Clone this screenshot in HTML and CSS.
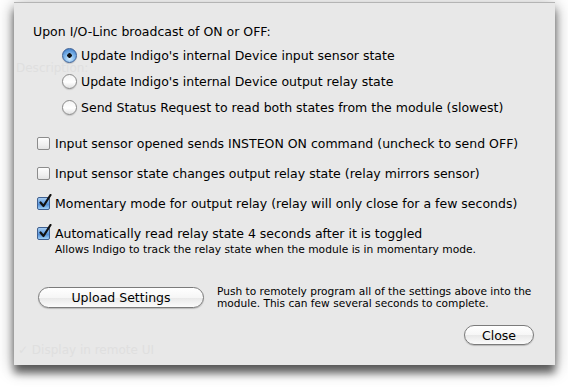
FILE: index.html
```html
<!DOCTYPE html>
<html lang="en">
<head>
    <meta charset="UTF-8">
    <title>I/O-Linc Settings</title>
    <link rel="stylesheet" href="styles.css">
</head>
<body>
    <div class="sheet">
        <div class="ghost">
            <div class="ghost-desc">Description:</div>
            <div class="ghost-remote">✓ Display in remote UI</div>
        </div>
        <div class="heading">Upon I/O-Linc broadcast of ON or OFF:</div>
        <div class="radio-group">
            <div class="row"><span class="radio selected"></span>Update Indigo's internal Device input sensor state</div>
            <div class="row"><span class="radio"></span>Update Indigo's internal Device output relay state</div>
            <div class="row"><span class="radio"></span>Send Status Request to read both states from the module (slowest)</div>
        </div>
        <div class="check-group">
            <div class="check-row"><span class="checkbox"></span>Input sensor opened sends INSTEON ON command (uncheck to send OFF)</div>
            <div class="check-row"><span class="checkbox"></span>Input sensor state changes output relay state (relay mirrors sensor)</div>
            <div class="check-row"><span class="checkbox checked"><svg viewBox="0 0 16 16" width="16" height="16"><path d="M3.5 8.5 L6.5 12 L13.5 1" fill="none" stroke="#111" stroke-width="2.2" stroke-linecap="round" stroke-linejoin="round"/></svg></span>Momentary mode for output relay (relay will only close for a few seconds)</div>
            <div class="check-row"><span class="checkbox checked"><svg viewBox="0 0 16 16" width="16" height="16"><path d="M3.5 8.5 L6.5 12 L13.5 1" fill="none" stroke="#111" stroke-width="2.2" stroke-linecap="round" stroke-linejoin="round"/></svg></span>Automatically read relay state 4 seconds after it is toggled</div>
            <div class="note">Allows Indigo to track the relay state when the module is in momentary mode.</div>
        </div>
        <div class="upload-row">
            <button class="pill upload">Upload Settings</button>
            <div class="upload-help">Push to remotely program all of the settings above into the<br>module. This can few several seconds to complete.</div>
        </div>
        <div class="footer">
            <button class="pill close">Close</button>
        </div>
    </div>
</body>
</html>
```

FILE: styles.css
```css
html, body {
    height: 388px;
}
body {
    margin: 0;
    background-color: #fff;
    font-family: "DejaVu Sans", sans-serif;
    font-size: 12.5px;
    color: #000;
}
.sheet {
    position: relative;
    box-sizing: border-box;
    width: 541px;
    height: 363px;
    margin: 2px 0 0 14px;
    padding: 19px 21px 0 19px;
    background-color: #e8e8e8;
    border-top: 1px solid #b4b4b4;
    box-shadow: 0 8px 8px rgba(0,0,0,0.55), 0 3px 16px rgba(0,0,0,0.35);
}
.sheet > div {
    position: relative;
}
/* faded window behind the sheet */
.ghost {
    position: absolute !important;
    left: 0;
    top: 0;
    width: 100%;
    height: 100%;
    color: #dfdfdf;
    font-size: 12px;
}
.ghost div {
    position: absolute;
}
.ghost-desc { left: 2px; top: 58px; }
.ghost-remote { left: 4px; top: 340px; }
.heading {
    line-height: 20px;
}
.radio-group {
    padding-left: 29px;
}
.row {
    display: flex;
    align-items: center;
    height: 26px;
}
.radio {
    box-sizing: border-box;
    width: 15px;
    height: 15px;
    margin-right: 4px;
    border-radius: 50%;
    border: 1px solid #8a8a8a;
    background: linear-gradient(#f4f4f4, #fff 55%, #e2e2e2);
    box-shadow: 0 1px 1px rgba(0,0,0,0.15);
}
.radio.selected {
    border-color: #3c5f94;
    background: radial-gradient(circle at 50% 50%, #111 0, #111 2px, transparent 2.5px),
                radial-gradient(circle at 50% 75%, #d2ecff 0, #7fb6ea 45%, #2f6fc0 100%);
}
.check-group {
    margin-top: 13px;
    padding-left: 4px;
}
.check-row {
    display: flex;
    align-items: center;
    height: 20px;
    margin-top: 10px;
}
.check-row:first-child {
    margin-top: 0;
}
.checkbox {
    position: relative;
    box-sizing: border-box;
    width: 13px;
    height: 13px;
    margin-right: 5px;
    border: 1px solid #8c8c8c;
    border-radius: 2px;
    background: linear-gradient(#fdfdfd, #f0f0f0 60%, #e4e4e4);
}
.checkbox.checked {
    border-color: #3f5f8f;
    background: linear-gradient(#a6cdf2, #5f9be0 50%, #4d8ad4 55%, #9fd0f7);
}
.checkbox svg {
    position: absolute;
    left: -1px;
    top: -4px;
}
.note {
    padding-left: 18px;
    font-size: 10.7px;
    line-height: 13px;
}
.upload-row {
    display: flex;
    align-items: center;
    margin-top: 29px;
    padding-left: 5px;
    height: 24px;
}
.pill {
    box-sizing: border-box;
    height: 21px;
    padding: 0;
    border: 1px solid #7b7b7b;
    border-radius: 11px;
    background: linear-gradient(#ffffff, #f6f6f6 50%, #e8e8e8 51%, #fbfbfb);
    box-shadow: 0 1px 1px rgba(0,0,0,0.2);
    font-family: "DejaVu Sans", sans-serif;
    font-size: 12.5px;
    color: #000;
}
.upload {
    width: 166px;
}
.upload-help {
    margin-left: 13px;
    font-size: 10.6px;
    line-height: 12px;
}
.footer {
    display: flex;
    justify-content: flex-end;
    margin-top: 16px;
}
.close {
    width: 70px;
    height: 20px;
}
```
